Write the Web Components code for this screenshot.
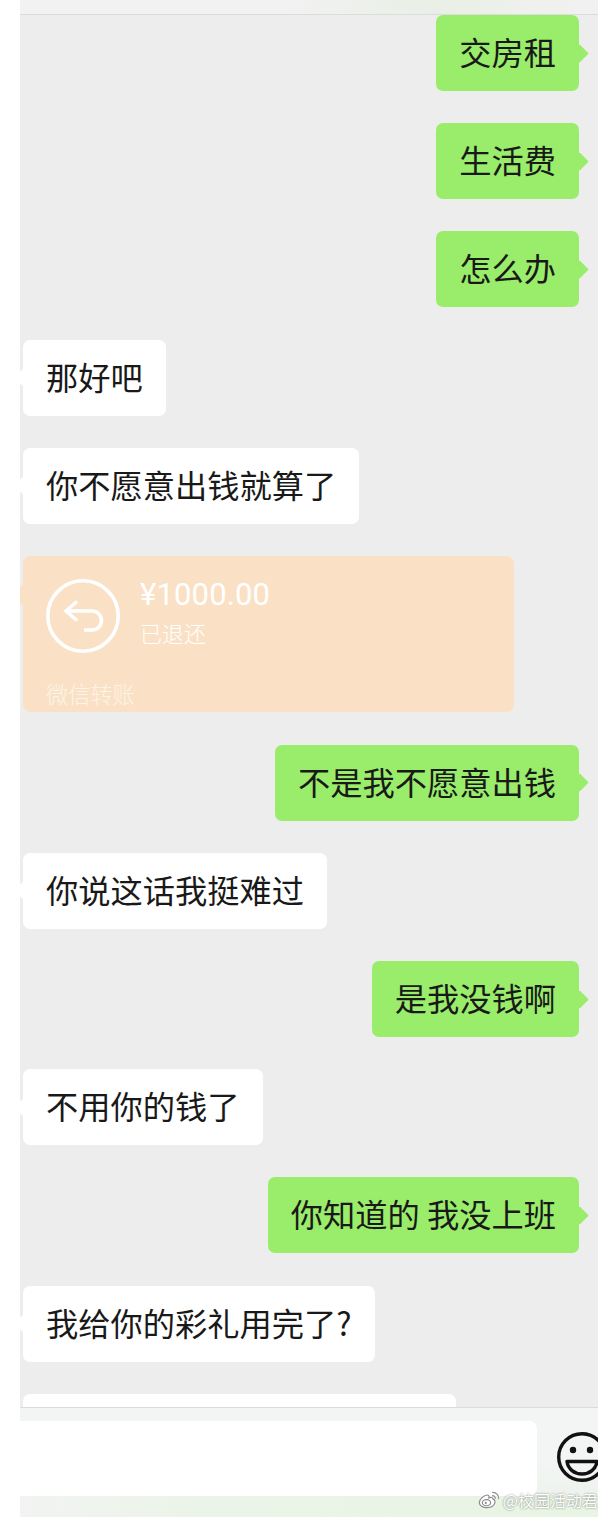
<!DOCTYPE html>
<html lang="zh">
<head>
<meta charset="utf-8">
<title>聊天</title>
<style>
  html, body {
    margin: 0;
    background: #fff;
  }
</style>
</head>
<body>
<chat-screen>
  <chat-bubble side="right">交房租</chat-bubble>
  <chat-bubble side="right">生活费</chat-bubble>
  <chat-bubble side="right">怎么办</chat-bubble>
  <chat-bubble>那好吧</chat-bubble>
  <chat-bubble>你不愿意出钱就算了</chat-bubble>
  <transfer-card amount="¥1000.00" status="已退还" label="微信转账"></transfer-card>
  <chat-bubble side="right">不是我不愿意出钱</chat-bubble>
  <chat-bubble>你说这话我挺难过</chat-bubble>
  <chat-bubble side="right">是我没钱啊</chat-bubble>
  <chat-bubble>不用你的钱了</chat-bubble>
  <chat-bubble side="right">你知道的 我没上班</chat-bubble>
  <chat-bubble>我给你的彩礼用完了?</chat-bubble>
  <chat-bubble cut style="width: 433px"></chat-bubble>
</chat-screen>

<script>
const FONT = '"Noto Sans CJK SC", "Liberation Sans", sans-serif'

const screenTemplate = document.createElement('template')
screenTemplate.innerHTML = `
  <style>
    :host {
      display: grid;
      grid-template-columns: minmax(0, 1fr);
      grid-template-rows: 15px 1fr 110px;
      width: 607px;
      height: 1517px;
      padding: 0 9px 0 20px;
      box-sizing: border-box;
      overflow: hidden;
      font-family: ${FONT};
      background: #fff;
    }

    #top {
      border-bottom: 1px solid #dcdcdc;
      background: linear-gradient(90deg, #f2f2f2 45%, #e9efe6 72%, #eff1ee 90%, #f1f1f1);
    }

    #messages {
      display: flex;
      flex-direction: column;
      gap: 32.2px;
      min-height: 0;
      overflow: hidden;
      padding-right: 19px;
      background: #ededed;
    }
  </style>
  <div id="top"></div>
  <div id="messages"><slot></slot></div>
  <chat-footer></chat-footer>
`

customElements.define('chat-screen',
  /**
   * The whole page: top strip, message list and input bar.
   */
  class extends HTMLElement {
    constructor () {
      super()
      this.attachShadow({ mode: 'open' })
        .appendChild(screenTemplate.content.cloneNode(true))
    }
  })

const bubbleTemplate = document.createElement('template')
bubbleTemplate.innerHTML = `
  <style>
    :host {
      display: block;
      flex: none;
      position: relative;
      align-self: flex-start;
      height: 76px;
      margin-left: 3px;
      padding: 0 23px;
      border-radius: 7px;
      background: #fff;
      color: #191919;
      font-size: 32.25px;
      line-height: 72px;
      white-space: nowrap;
      box-sizing: border-box;
    }

    :host([side="right"]) {
      align-self: flex-end;
      margin-left: 0;
      background: #99ed6a;
    }

    :host([cut]) {
      height: 40px;
      margin-bottom: -40px;
    }

    #tail {
      position: absolute;
      top: 31.5px;
      left: -6.5px;
      width: 13px;
      height: 13px;
      border-radius: 1px;
      background: inherit;
      transform: rotate(45deg);
    }

    :host([side="right"]) #tail {
      left: auto;
      right: -6.5px;
    }

    :host([cut]) #tail {
      display: none;
    }
  </style>
  <span id="tail"></span><slot></slot>
`

customElements.define('chat-bubble',
  /**
   * A text message, white on the left or green on the right.
   */
  class extends HTMLElement {
    constructor () {
      super()
      this.attachShadow({ mode: 'open' })
        .appendChild(bubbleTemplate.content.cloneNode(true))
    }
  })

const cardTemplate = document.createElement('template')
cardTemplate.innerHTML = `
  <style>
    :host {
      display: flex;
      flex: none;
      flex-direction: column;
      justify-content: space-between;
      position: relative;
      width: 491px;
      height: 156.5px;
      margin-left: 3px;
      padding: 23px 23px 3px;
      border-radius: 8px;
      box-sizing: border-box;
      background: #fae1c5;
      color: #fff;
    }

    #tail {
      position: absolute;
      top: 29px;
      left: -3px;
      width: 6px;
      height: 20px;
      border-radius: 3px 0 0 3px;
      background: inherit;
    }

    #row {
      display: flex;
      gap: 21px;
    }

    svg {
      display: block;
      flex: none;
    }

    #amount {
      font-family: Roboto, "Liberation Sans", sans-serif;
      font-size: 31px;
      line-height: 32px;
      letter-spacing: .15px;
      margin-left: -1px;
    }

    #status {
      margin-top: 5px;
      margin-left: -1px;
      font-size: 22px;
      line-height: 32px;
      font-weight: 300;
    }

    #label {
      font-size: 22.25px;
      line-height: 32px;
      font-weight: 300;
      color: #fdf3e8;
    }
  </style>
  <span id="tail"></span>
  <div id="row">
    <svg width="74" height="74" viewBox="0 0 74 74" fill="none" stroke="#fff" stroke-width="3.6">
      <circle cx="37" cy="37" r="35.2"/>
      <path d="M31 22.5 20 32 31 41.5M20 32H46A9.5 9.5 0 0 1 46 51H38"/>
    </svg>
    <div>
      <div id="amount"></div>
      <div id="status"></div>
    </div>
  </div>
  <div id="label"></div>
`

customElements.define('transfer-card',
  /**
   * The returned WeChat transfer card.
   */
  class extends HTMLElement {
    constructor () {
      super()
      this.attachShadow({ mode: 'open' })
        .appendChild(cardTemplate.content.cloneNode(true))
    }

    /**
     * Copy the attributes into the card's texts.
     */
    connectedCallback () {
      this.shadowRoot.querySelector('#amount').textContent = this.getAttribute('amount')
      this.shadowRoot.querySelector('#status').textContent = this.getAttribute('status')
      this.shadowRoot.querySelector('#label').textContent = this.getAttribute('label')
    }
  })

const footerTemplate = document.createElement('template')
footerTemplate.innerHTML = `
  <style>
    :host {
      display: flex;
      align-items: flex-start;
      gap: 20px;
      position: relative;
      overflow: hidden;
      padding-top: 13px;
      box-sizing: border-box;
      border-top: 1px solid #dcdcdc;
      background:
        linear-gradient(90deg, #f2f3f2, #ebf4e8 32%, #e8f4e4) 0 100% / 100% 21px no-repeat,
        linear-gradient(180deg, #f3f4f4 0, #f3f4f4 50%, #eaf2e7 100%);
    }

    #input {
      flex: none;
      width: 517px;
      height: 75px;
      border-radius: 0 8px 8px 0;
      background: #fff;
    }

    #smile {
      display: block;
      flex: none;
      margin-top: 11px;
    }

    #mark {
      position: absolute;
      right: 0;
      bottom: 6px;
      display: flex;
      align-items: center;
      gap: 3px;
      color: #fff;
      font-size: 16px;
      line-height: 22px;
      white-space: nowrap;
      text-shadow: 0 0 2px rgba(0, 0, 0, .55);
    }
  </style>
  <div id="input"></div>
  <svg id="smile" width="50" height="50" viewBox="0 0 50 50" fill="none" stroke="#111" stroke-width="3.4">
    <circle cx="25" cy="25" r="23.3"/>
    <circle cx="16" cy="18" r="3.2" fill="#111" stroke="none"/>
    <circle cx="33" cy="18" r="3.2" fill="#111" stroke="none"/>
    <path d="M10 29.5H40C39 37 32.5 42 25 42S11 37 10 29.5Z" stroke-linejoin="round"/>
  </svg>
  <div id="mark">
    <svg width="22" height="18" viewBox="0 0 24 20" fill="#fff" stroke="#8d8d8d" stroke-width="1.3">
      <path d="M10 18.5C5 18.5 1.2 16 1.2 12.8 1.2 9.5 6.5 4.4 10 4.4 12 4.4 12.3 6 11.8 7.6 14 6.8 16.2 7 16.2 8.8 18 9.4 18.7 10.6 18.7 12 18.7 15.7 14.8 18.5 10 18.5Z"/>
      <ellipse cx="9.2" cy="13" rx="4.6" ry="3.4"/>
      <circle cx="8.4" cy="13.2" r="1.2" fill="#8d8d8d" stroke="none"/>
      <path d="M15.5 5.2C17.6 5 19.2 6.5 19 8.8M15.5 1.5C20 1.2 23.3 4.4 22.7 9" fill="none"/>
    </svg>
    <span>@校园活动君</span>
  </div>
`

customElements.define('chat-footer',
  /**
   * The input bar with its emoji button and the watermark over it.
   */
  class extends HTMLElement {
    constructor () {
      super()
      this.attachShadow({ mode: 'open' })
        .appendChild(footerTemplate.content.cloneNode(true))
    }
  })
</script>
</body>
</html>
